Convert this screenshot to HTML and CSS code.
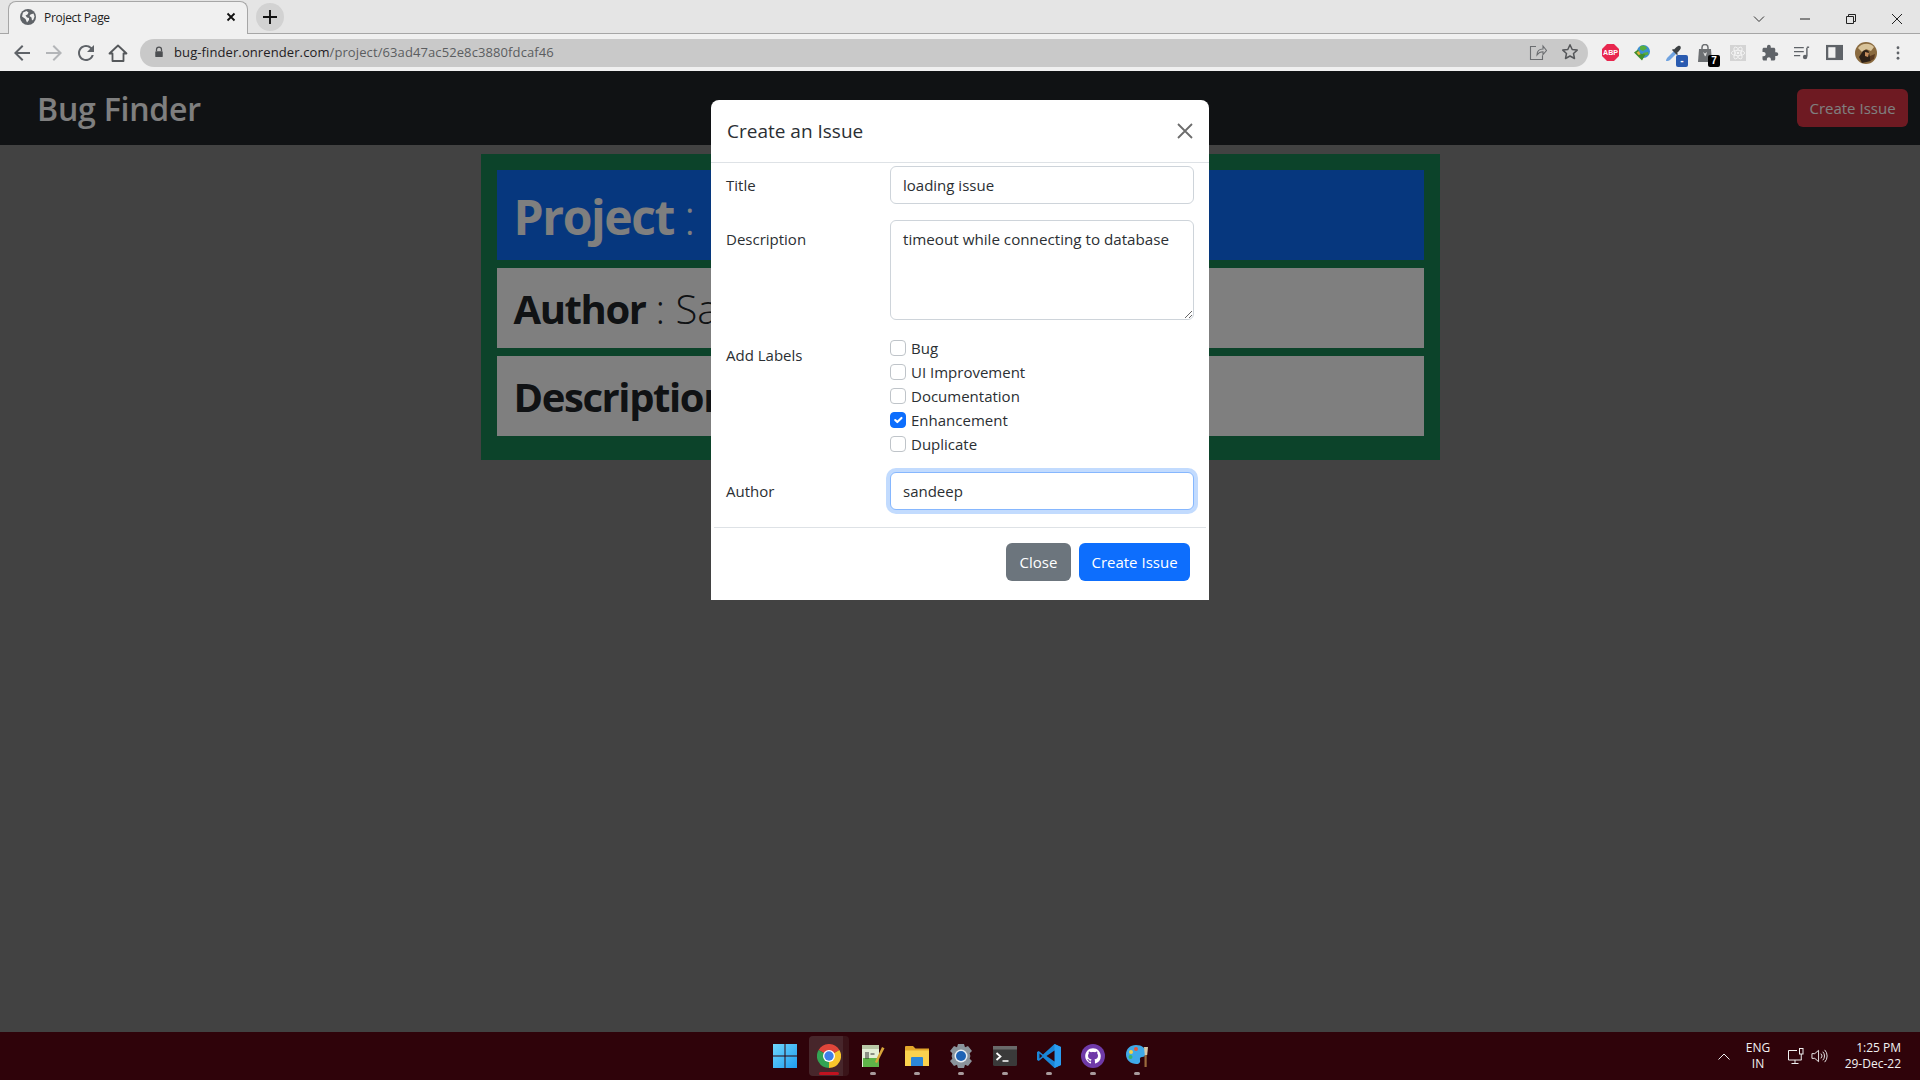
FILE: index.html
```html
<!DOCTYPE html>
<html lang="en">
  <head>
    <meta charset="UTF-8" />
    <title>Project Page</title>
    <link rel="stylesheet" href="styles.css">
  </head>
  <body>
    <div class="tab-strip">
      <div class="tab">
        <svg class="favicon" viewBox="0 0 16 16"><circle cx="8" cy="8" r="8" fill="#5f6368"/><path d="M3 3.5 6.5 2l2 1.5-1 2-2 1 1.5 2 2 .5v2L7 13.5 5.500 10 2 7.500zM10.500 5.500l3-1 1 3-1 3-1.500 1-.5-3-2-1.500z" fill="#f0f0f0"/></svg>
        <span class="tab-title">Project Page</span>
        <svg class="tab-close" viewBox="0 0 10 10"><path d="M1.500 1.500l7 7M8.500 1.500l-7 7" stroke="#111" stroke-width="1.800"/></svg>
      </div>
      <div class="new-tab">
        <svg viewBox="0 0 14 14" width="14" height="14"><path d="M7 0v14M0 7h14" stroke="#111" stroke-width="1.900"/></svg>
      </div>
      <div class="window-controls">
        <svg viewBox="0 0 12 12"><path d="M1 3.500l5 5 5-5" fill="none" stroke="#333" stroke-width="1"/></svg>
        <svg viewBox="0 0 12 12"><path d="M1 6h10" stroke="#222" stroke-width="1"/></svg>
        <svg viewBox="0 0 12 12"><path d="M1.500 3.500h7v7h-7zM3.500 3.500v-2h7v7h-2" fill="none" stroke="#222" stroke-width="1"/></svg>
        <svg viewBox="0 0 12 12"><path d="M1 1l10 10M11 1L1 11" stroke="#222" stroke-width="1"/></svg>
      </div>
    </div>

    <div class="toolbar">
      <div class="nav-buttons">
        <svg viewBox="0 0 24 24"><path d="M20 11H7.830l5.590-5.590L12 4l-8 8 8 8 1.410-1.410L7.830 13H20v-2z" fill="#5f6368"/></svg>
        <svg viewBox="0 0 24 24"><path d="M4 11h12.170l-5.590-5.590L12 4l8 8-8 8-1.410-1.410L16.170 13H4v-2z" fill="#b3b5b8"/></svg>
        <svg viewBox="0 0 24 24"><path d="M17.650 6.350A7.958 7.958 0 0 0 12 4c-4.420 0-7.990 3.580-7.990 8s3.570 8 7.990 8c3.730 0 6.840-2.550 7.730-6h-2.080A5.990 5.990 0 0 1 12 18c-3.310 0-6-2.690-6-6s2.690-6 6-6c1.660 0 3.140.69 4.220 1.780L13 11h7V4l-2.350 2.350z" fill="#5f6368"/></svg>
        <svg viewBox="0 0 24 24"><path d="M3.500 12.500 12 4.500l8.500 8h-3V20h-11v-7.500z" fill="none" stroke="#55585b" stroke-width="1.800" stroke-linejoin="round"/></svg>
      </div>
      <div class="omnibox">
        <svg class="lock" viewBox="0 0 12 14"><path d="M3 6V4a3 3 0 0 1 6 0v2" fill="none" stroke="#4d4f52" stroke-width="1.500"/><rect x="1.500" y="6" width="9" height="7" rx="1" fill="#4d4f52"/></svg>
        <span class="url"><span class="url-host">bug-finder.onrender.com</span>/project/63ad47ac52e8c3880fdcaf46</span>
        <svg class="omni-icon" viewBox="0 0 18 18"><path d="M7 3.500H1.500v13h12v-4M8 12c0-4 2.500-6 6-6V3l3.500 4.500L14 11.500V8.800c-2.500 0-4.500 1-6 3.200z" fill="none" stroke="#6b6d70" stroke-width="1.100"/></svg>
        <svg class="omni-icon" viewBox="0 0 18 18"><path d="M9 1.800l2.200 4.700 5 .6-3.700 3.400 1 5L9 13l-4.500 2.500 1-5L1.800 7.100l5-.6z" fill="none" stroke="#55575a" stroke-width="1.500" stroke-linejoin="round"/></svg>
      </div>
      <div class="extensions">
        <svg class="ext-abp" viewBox="0 0 18 18"><path d="M5.300 0h7.400L18 5.300v7.400L12.700 18H5.300L0 12.700V5.300z" fill="#e8274f"/><text x="9" y="12" text-anchor="middle" class="abp-text">ABP</text></svg>
        <svg viewBox="0 0 18 18"><circle cx="10.500" cy="7.500" r="6.500" fill="#3b8fd0"/><path d="M7 2.500c3-2 6-1 7 2l-4 2.500-3-1.500zM10 9l5-1 .5 2.500-5.500 1.500z" fill="#57ae3f"/><path d="M1 8.500 5 5.500l2 4 5.500 1-3.500 6z" fill="#3f8f2e"/><path d="M3.500 8.500 6 7l1.500 3.500-2 .5z" fill="#e2b23c"/></svg>
        <span class="ext-badged">
          <svg viewBox="0 0 18 18"><path d="M1 17c0-2 1-3 2-4l6-6 2.500 2.500-6 6c-1 1-2.500 1.500-4.500 1.500z" fill="#6fa2e0"/><path d="M9 5.500l2-2c2-2 4-2 4.500-1s.5 2.500-1.500 4.500l-2 2 1 1-1 1-5-5 1-1z" fill="#3c4043"/></svg>
          <span class="badge badge-blue">-</span>
        </span>
        <span class="ext-badged">
          <svg viewBox="0 0 18 18"><path d="M2 5h12l1 13H1z" fill="#6d7073"/><path d="M5 6V3.500a3 3 0 0 1 6 0V6" fill="none" stroke="#6d7073" stroke-width="1.500"/><path d="M6 8l2 1.500 2-1.500-1 3.500-1 1z" fill="#ddd"/></svg>
          <span class="badge badge-black">7</span>
        </span>
        <svg class="ext-react" viewBox="0 0 18 18"><rect width="18" height="18" fill="#d4d4d4"/><g fill="none" stroke="#f4f4f4" stroke-width="1"><ellipse cx="9" cy="9" rx="7.500" ry="3"/><ellipse cx="9" cy="9" rx="7.500" ry="3" transform="rotate(60 9 9)"/><ellipse cx="9" cy="9" rx="7.500" ry="3" transform="rotate(120 9 9)"/></g><circle cx="9" cy="9" r="1.500" fill="#f4f4f4"/></svg>
        <svg viewBox="0 0 24 24"><path d="M20.500 11H19V7c0-1.100-.9-2-2-2h-4V3.500C13 2.120 11.880 1 10.500 1S8 2.120 8 3.500V5H4c-1.100 0-1.990.9-1.990 2v3.800H3.500c1.490 0 2.700 1.210 2.700 2.700s-1.210 2.700-2.700 2.700H2V20c0 1.100.9 2 2 2h3.800v-1.500c0-1.490 1.210-2.700 2.700-2.700 1.490 0 2.700 1.210 2.700 2.700V22H17c1.100 0 2-.9 2-2v-4h1.500c1.380 0 2.500-1.120 2.500-2.500S21.880 11 20.500 11z" fill="#5f6368"/></svg>
        <svg class="ext-media" viewBox="0 0 18 18"><path d="M0 3h11M0 7.500h11M0 12h7" stroke="#5f6368" stroke-width="1.500"/><path d="M14.500 3v10" stroke="#5f6368" stroke-width="1.600"/><path d="M14.500 2.500H17" stroke="#5f6368" stroke-width="1.600"/><circle cx="12.500" cy="13.500" r="2.500" fill="#5f6368"/></svg>
        <svg class="ext-panel" viewBox="0 0 18 18"><rect x="1.200" y="2.200" width="15.600" height="13.600" fill="none" stroke="#5f6368" stroke-width="2.400"/><rect x="10" y="2" width="7" height="14" fill="#5f6368"/></svg>
        <svg class="ext-avatar" viewBox="0 0 22 22"><circle cx="11" cy="11" r="11" fill="#8a6a3f"/><path d="M3 6c3-5 12-6 16-1l-3 4-5-2-4 3z" fill="#d8c39a"/><path d="M8 9c3-2 6-1 6 2l2 8-9 2-3-6z" fill="#2d2117"/><path d="M10 10l4 1-1 4-3-1z" fill="#c58d5d"/><path d="M15 14l5-2-1 5-4 2z" fill="#5a3a20"/></svg>
        <svg class="ext-dots" viewBox="0 0 4 16"><circle cx="2" cy="2" r="1.600" fill="#5f6368"/><circle cx="2" cy="8" r="1.600" fill="#5f6368"/><circle cx="2" cy="14" r="1.600" fill="#5f6368"/></svg>
      </div>
    </div>

    <div class="viewport">
      <nav class="navbar">
        <span class="brand">Bug Finder</span>
        <button class="btn btn-danger">Create Issue</button>
      </nav>

      <main class="project-card">
        <div class="project-row project-name"><b>Project</b> <span>:</span></div>
        <div class="project-row"><b>Author</b> <span>: Sandeep</span></div>
        <div class="project-row"><b>Description</b> <span>:</span></div>
      </main>

      <div class="backdrop">
        <div class="modal">
          <div class="modal-header">
            <h5>Create an Issue</h5>
            <svg class="modal-close" viewBox="0 0 16 16"><path d="M1 1l14 14M15 1L1 15" stroke="#6c6c6c" stroke-width="1.800"/></svg>
          </div>
          <form class="modal-body">
            <div class="form-row">
              <label for="title">Title</label>
              <input type="text" id="title" class="form-control" value="loading issue" />
            </div>
            <div class="form-row">
              <label for="description">Description</label>
              <textarea id="description" class="form-control">timeout while connecting to database</textarea>
            </div>
            <div class="form-row">
              <label>Add Labels</label>
              <div class="check-list">
                <label class="check"><input type="checkbox" />Bug</label>
                <label class="check"><input type="checkbox" />UI Improvement</label>
                <label class="check"><input type="checkbox" />Documentation</label>
                <label class="check"><input type="checkbox" checked />Enhancement</label>
                <label class="check"><input type="checkbox" />Duplicate</label>
              </div>
            </div>
            <div class="form-row">
              <label for="author">Author</label>
              <input type="text" id="author" class="form-control is-focused" value="sandeep" />
            </div>
          </form>
          <div class="modal-footer">
            <button class="btn btn-secondary">Close</button>
            <button class="btn btn-primary">Create Issue</button>
          </div>
        </div>
      </div>
    </div>

    <footer class="taskbar">
      <div class="task-icons">
        <span class="task-icon">
          <svg viewBox="0 0 24 24"><defs><linearGradient id="winBlue" x1="0" y1="0" x2="1" y2="1"><stop offset="0" stop-color="#6fd6fb"/><stop offset="1" stop-color="#1e9df0"/></linearGradient></defs><path d="M0 0h11.500v11.500H0zM12.500 0H24v11.500H12.500zM0 12.500h11.500V24H0zM12.500 12.500H24V24H12.500z" fill="url(#winBlue)"/></svg>
        </span>
        <span class="task-icon is-active">
          <svg viewBox="0 0 24 24"><path d="M12 12L1.600 6A12 12 0 0 1 22.400 6z" fill="#e0463a"/><path d="M12 12l10.400-6A12 12 0 0 1 12 24z" fill="#f8c52c"/><path d="M12 12v12A12 12 0 0 1 1.600 6z" fill="#33a353"/><circle cx="12" cy="12" r="6" fill="#fff"/><circle cx="12" cy="12" r="4.700" fill="#3f7fe8"/></svg>
        </span>
        <span class="task-icon has-dot">
          <svg viewBox="0 0 24 24"><path d="M1 1h17v22H1z" fill="#e4efd8"/><path d="M1 1h17v4H1z" fill="#b9c7a6"/><path d="M2 14h16v9H2z" fill="#5fb548"/><path d="M5 8v7M7 8v7M9.500 10h4" stroke="#333" stroke-width="1"/><path d="M14 18l7-15 2.500 1.200L16 19z" fill="#d9a53a"/></svg>
        </span>
        <span class="task-icon has-dot">
          <svg viewBox="0 0 24 24"><path d="M0 3a1 1 0 0 1 1-1h7l2.500 2.500H24v4H0z" fill="#e3a72b"/><path d="M0 6.500h24V22H0z" fill="#fbd24e"/><path d="M6 14a1 1 0 0 1 1-1h10a1 1 0 0 1 1 1v8H6z" fill="#2b87d8"/></svg>
        </span>
        <span class="task-icon has-dot">
          <svg viewBox="0 0 24 24"><path d="M9 0h6l1 3.200 3-1.300 4 5-2.300 2.300.7 2.800-.7 2.800L23 17l-4 5-3-1.300L15 24H9l-1-3.300L5 22l-4-5 2.300-2.200L2.600 12l.7-2.800L1 6.900l4-5 3 1.300z" fill="#8a939b"/><circle cx="12" cy="12" r="6.500" fill="#e8eef3"/><circle cx="12" cy="12" r="5" fill="#1f63b5"/></svg>
        </span>
        <span class="task-icon has-dot">
          <svg viewBox="0 0 24 24"><rect y="2" width="24" height="20" rx="1.500" fill="#3a3a3a"/><rect y="2" width="24" height="3.500" fill="#6a6a6a"/><path d="M3.500 9l4 3.500-4 3.500" fill="none" stroke="#fff" stroke-width="1.800"/><path d="M9.500 17h6" stroke="#fff" stroke-width="1.500"/></svg>
        </span>
        <span class="task-icon has-dot">
          <svg viewBox="0 0 24 24"><path d="M17.500 0 24 3v18l-6.500 3L6 13.500 1.800 17 0 16V8l1.800-1L6 10.500z" fill="#1a86d8"/><path d="M17.500 0 24 3v18l-6.500 3z" fill="#2a9df0"/><path d="M17.500 6.500v11L9.500 12z" fill="#2f030a"/><path d="M2.500 9.500v5L5.300 12z" fill="#2f030a"/></svg>
        </span>
        <span class="task-icon has-dot">
          <svg viewBox="0 0 24 24"><circle cx="12" cy="12" r="12" fill="#6f3aa8"/><g transform="translate(4.200 4.200) scale(.975)"><path d="M8 0C3.580 0 0 3.580 0 8c0 3.540 2.290 6.530 5.470 7.590.4.070.55-.17.55-.38 0-.19-.01-.82-.01-1.490-2.010.37-2.530-.49-2.690-.94-.09-.23-.48-.94-.82-1.130-.28-.15-.68-.52-.01-.53.63-.01 1.080.58 1.230.82.72 1.210 1.870.87 2.330.66.070-.52.28-.87.51-1.070-1.780-.2-3.640-.89-3.640-3.950 0-.87.31-1.590.82-2.150-.08-.2-.36-1.020.08-2.120 0 0 .67-.21 2.200.82.64-.18 1.320-.27 2-.27.68 0 1.360.09 2 .27 1.530-1.040 2.200-.82 2.200-.82.44 1.100.16 1.920.08 2.120.51.56.82 1.270.82 2.150 0 3.070-1.870 3.750-3.650 3.950.29.25.54.73.54 1.480 0 1.070-.01 1.930-.01 2.200 0 .21.15.46.55.38A8.013 8.013 0 0 0 16 8c0-4.420-3.580-8-8-8z" fill="#fff"/></g></svg>
        </span>
        <span class="task-icon has-dot">
          <svg viewBox="0 0 24 24"><path d="M11 1c6 0 10 3 10 8 0 3-2 4-4 4-1.500 0-2.500 1-2 3 .5 2-.5 4-3.500 4C5.500 20 1 16 1 10.500 1 5 5 1 11 1z" fill="#3fa9e8"/><circle cx="6" cy="8" r="2" fill="#f7d046"/><circle cx="11" cy="5" r="2" fill="#e2573f"/><circle cx="5.500" cy="13" r="2" fill="#3bb56b"/><path d="M19 3h4l-.8 8h-2.400z" fill="#d7c9a8"/><path d="M19.500 11h2.200v12h-2.200z" fill="#9a6b3c"/></svg>
        </span>
      </div>
      <div class="tray">
        <svg class="tray-chevron" viewBox="0 0 12 7"><path d="M.5 6.500 6 1l5.500 5.500" fill="none" stroke="#eee" stroke-width="1"/></svg>
        <div class="tray-lang"><span>ENG</span><span>IN</span></div>
        <svg class="tray-network" viewBox="0 0 18 18"><path d="M10 3.500H1.500v9.500h13M8 13v3M4.500 16.500h7" fill="none" stroke="#eee" stroke-width="1"/><rect x="12.500" y="1.500" width="3.500" height="5.500" fill="none" stroke="#eee" stroke-width="1"/><path d="M14.250 7v6" stroke="#eee" stroke-width="1"/></svg>
        <svg class="tray-sound" viewBox="0 0 18 16"><path d="M1 5.500h3L8 2v12l-4-3.500H1z" fill="none" stroke="#eee" stroke-width="1"/><path d="M10.500 5.500a3.500 3.500 0 0 1 0 5M12.500 3.500a6.500 6.500 0 0 1 0 9M14.500 1.500a9.500 9.500 0 0 1 0 13" fill="none" stroke="#eee" stroke-width="1"/></svg>
        <div class="tray-clock"><span>1:25 PM</span><span>29-Dec-22</span></div>
      </div>
    </footer>
  </body>
</html>
```

FILE: styles.css
```css
* {
  box-sizing: border-box;
}

body {
  margin: 0;
  height: 100vh;
  display: flex;
  flex-direction: column;
  overflow: hidden;
  font-family: "Open Sans", "Noto Sans", sans-serif;
  font-size: 15px;
  color: #2b2f33;
  background-color: #858585;
}

/* browser chrome */
.tab-strip {
  height: 34px;
  flex-shrink: 0;
  display: flex;
  align-items: flex-end;
  padding-left: 8px;
  background-color: #e5e5e5;
  border-bottom: 1px solid #a6a6a6;
}

.tab {
  width: 240px;
  height: 33px;
  margin-bottom: -1px;
  display: flex;
  align-items: center;
  padding: 0 11px 2px 11px;
  background-color: #f0f0f0;
  border: 1px solid #a6a6a6;
  border-bottom: none;
  border-radius: 8px 8px 0 0;
}

.favicon {
  width: 16px;
  height: 16px;
}

.tab-title {
  flex: 1;
  margin-left: 8px;
  font-size: 12px;
  letter-spacing: -0.3px;
  color: #222;
}

.tab-close {
  width: 10px;
  height: 10px;
}

.new-tab {
  width: 28px;
  height: 28px;
  margin: 0 0 2px 8px;
  display: flex;
  align-items: center;
  justify-content: center;
  border-radius: 50%;
  background-color: #d2d2d2;
}

.window-controls {
  margin-left: auto;
  height: 28px;
  display: flex;
  align-items: center;
  gap: 34px;
  padding-right: 17px;
}

.window-controls svg {
  width: 12px;
  height: 12px;
}

.toolbar {
  height: 37px;
  flex-shrink: 0;
  display: flex;
  align-items: center;
  background-color: #f0f0f0;
}

.nav-buttons {
  width: 140px;
  display: flex;
  gap: 8px;
  padding-left: 10px;
}

.nav-buttons svg {
  width: 24px;
  height: 24px;
}

.omnibox {
  width: 1448px;
  height: 28px;
  display: flex;
  align-items: center;
  padding: 0 9px 2px 14px;
  border-radius: 14px;
  background-color: #c9c9c9;
}

.lock {
  width: 10px;
  height: 12px;
}

.url {
  flex: 1;
  margin-left: 10px;
  font-size: 13px;
  letter-spacing: 0.1px;
  color: #5b5d60;
}

.url-host {
  color: #1f2023;
}

.omni-icon {
  width: 18px;
  height: 18px;
  margin-left: 14px;
}

.extensions {
  display: grid;
  grid-template-columns: repeat(10, 32px);
  justify-items: center;
  align-items: center;
  padding-left: 6px;
}

.extensions > svg,
.ext-badged > svg {
  width: 18px;
  height: 18px;
}

.extensions > .ext-abp {
  width: 17px;
  height: 17px;
}

.abp-text {
  font-family: "Liberation Sans", sans-serif;
  font-size: 7.5px;
  font-weight: bold;
  fill: #fff;
}

.ext-badged {
  position: relative;
  display: block;
  width: 18px;
  height: 18px;
}

.badge {
  position: absolute;
  right: -5px;
  bottom: -5px;
  width: 12px;
  height: 12px;
  border-radius: 2px;
  font-family: "Liberation Sans", sans-serif;
  font-size: 10px;
  font-weight: bold;
  line-height: 12px;
  text-align: center;
  color: #fff;
}

.badge-blue {
  background-color: #2a5bb0;
}

.badge-black {
  background-color: #000;
}

.extensions > .ext-react {
  width: 16px;
  height: 16px;
}

.extensions > .ext-media {
  width: 16px;
  height: 16px;
}

.extensions > .ext-panel {
  width: 17px;
  height: 17px;
}

.extensions > .ext-avatar {
  width: 22px;
  height: 22px;
}

.extensions > .ext-dots {
  width: 4px;
  height: 14px;
}

/* page */
.viewport {
  position: relative;
  flex: 1;
  min-height: 0;
}

.navbar {
  height: 74px;
  display: flex;
  align-items: center;
  justify-content: space-between;
  padding: 0 12px 0 37px;
  background-color: #212529;
}

.brand {
  padding-top: 1px;
  font-size: 32px;
  font-weight: 600;
  letter-spacing: -0.2px;
  color: #fff;
}

.btn {
  height: 38px;
  padding: 0 12px;
  border: none;
  border-radius: 6px;
  font-family: inherit;
  font-size: 15px;
  color: #fff;
}

.btn-danger {
  width: 111px;
  background-color: #dc3545;
}

.btn-primary {
  width: 111px;
  background-color: #0d6efd;
}

.btn-secondary {
  width: 65px;
  background-color: #6c757d;
}

.project-card {
  width: 959px;
  margin: 9px auto 0;
  padding: 16px 16px 16px;
  background-color: #198754;
}

.project-row {
  height: 80px;
  margin-bottom: 8px;
  padding: 1px 0 0 17px;
  display: flex;
  align-items: center;
  gap: 10px;
  font-size: 40px;
  color: #212529;
  background-color: #ffffff;
}

.project-row b {
  font-weight: 700;
  letter-spacing: -1.4px;
}

.project-row span {
  font-weight: 300;
}

.project-row.project-name {
  height: 90px;
  padding-top: 3px;
  font-size: 48px;
  color: #ffffff;
  background-color: #0d6efd;
}

.backdrop {
  position: absolute;
  inset: 0;
  background-color: rgba(0, 0, 0, 0.5);
}

/* modal */
.modal {
  width: 498px;
  height: 500px;
  margin: 29px auto 0;
  background-color: #ffffff;
  border-radius: 8px 8px 0 0;
}

.modal-header {
  height: 63px;
  display: flex;
  align-items: center;
  justify-content: space-between;
  padding: 0 16px;
  border-bottom: 1px solid #dee2e6;
}

.modal-header h5 {
  margin: 0;
  font-size: 19px;
  font-weight: 500;
}

.modal-close {
  width: 16px;
  height: 16px;
}

.modal-body {
  display: flex;
  flex-direction: column;
  gap: 16px;
  padding: 3px 15px 17px 15px;
}

.form-row {
  display: grid;
  grid-template-columns: 164px 1fr;
}

.form-row > label {
  padding-top: 7px;
  line-height: 24px;
}

.form-control {
  display: block;
  width: 100%;
  height: 38px;
  padding: 6px 12px;
  border: 1px solid #ced4da;
  border-radius: 6px;
  outline: none;
  font-family: inherit;
  font-size: 15px;
  line-height: 24px;
  color: #2b2f33;
}

textarea.form-control {
  height: 100px;
  font-size: 15.2px;
}

.is-focused {
  border-color: #86b7fe;
  box-shadow: 0 0 0 4px rgba(13, 110, 253, 0.25);
}

.check {
  height: 24px;
  display: flex;
  align-items: center;
  line-height: 24px;
}

.check input {
  appearance: none;
  width: 16px;
  height: 16px;
  margin: 0 5px 0 0;
  border: 1px solid #bfc4c9;
  border-radius: 4px;
  background-color: #fff;
}

.check input:checked {
  border-color: #0d6efd;
  background-color: #0d6efd;
  background-image: url("data:image/svg+xml,%3csvg xmlns='http://www.w3.org/2000/svg' viewBox='0 0 20 20'%3e%3cpath fill='none' stroke='%23fff' stroke-linecap='round' stroke-linejoin='round' stroke-width='3' d='m6 10 3 3 6-6'/%3e%3c/svg%3e");
}

.modal-footer {
  margin: 0 3px;
  padding: 15px 16px 19px;
  display: flex;
  justify-content: flex-end;
  gap: 8px;
  border-top: 1px solid #dee2e6;
}

/* windows taskbar */
.taskbar {
  height: 48px;
  flex-shrink: 0;
  position: relative;
  display: flex;
  justify-content: center;
  color: #f2f2f2;
  background-color: #2f030a;
}

.task-icons {
  display: flex;
  margin-left: 2px;
}

.task-icon {
  position: relative;
  width: 44px;
  height: 48px;
  display: flex;
  align-items: center;
  justify-content: center;
}

.task-icon svg {
  width: 24px;
  height: 24px;
}

.task-icon.is-active {
  width: 40px;
  height: 40px;
  margin: 4px 2px 0;
  border-radius: 4px;
  background: linear-gradient(to right, #47262b 34px, #3a1419 34px);
}

.task-icon.is-active::after {
  content: "";
  position: absolute;
  left: 10px;
  right: 10px;
  bottom: 1px;
  height: 3px;
  border-radius: 2px;
  background-color: #c1121f;
}

.has-dot::after {
  content: "";
  position: absolute;
  left: 19px;
  bottom: 5px;
  width: 6px;
  height: 3px;
  border-radius: 2px;
  background-color: #a89a9c;
}

.tray {
  position: absolute;
  top: 0;
  right: 19px;
  height: 48px;
  display: flex;
  align-items: center;
  font-size: 12px;
  line-height: 16px;
}

.tray-chevron {
  width: 12px;
  height: 7px;
}

.tray-lang {
  width: 34px;
  margin-left: 11px;
  display: flex;
  flex-direction: column;
  align-items: center;
}

.tray-network {
  width: 18px;
  height: 18px;
  margin-left: 12px;
}

.tray-sound {
  width: 17px;
  height: 16px;
  margin-left: 6px;
}

.tray-clock {
  width: 73px;
  display: flex;
  flex-direction: column;
  align-items: flex-end;
}
```
